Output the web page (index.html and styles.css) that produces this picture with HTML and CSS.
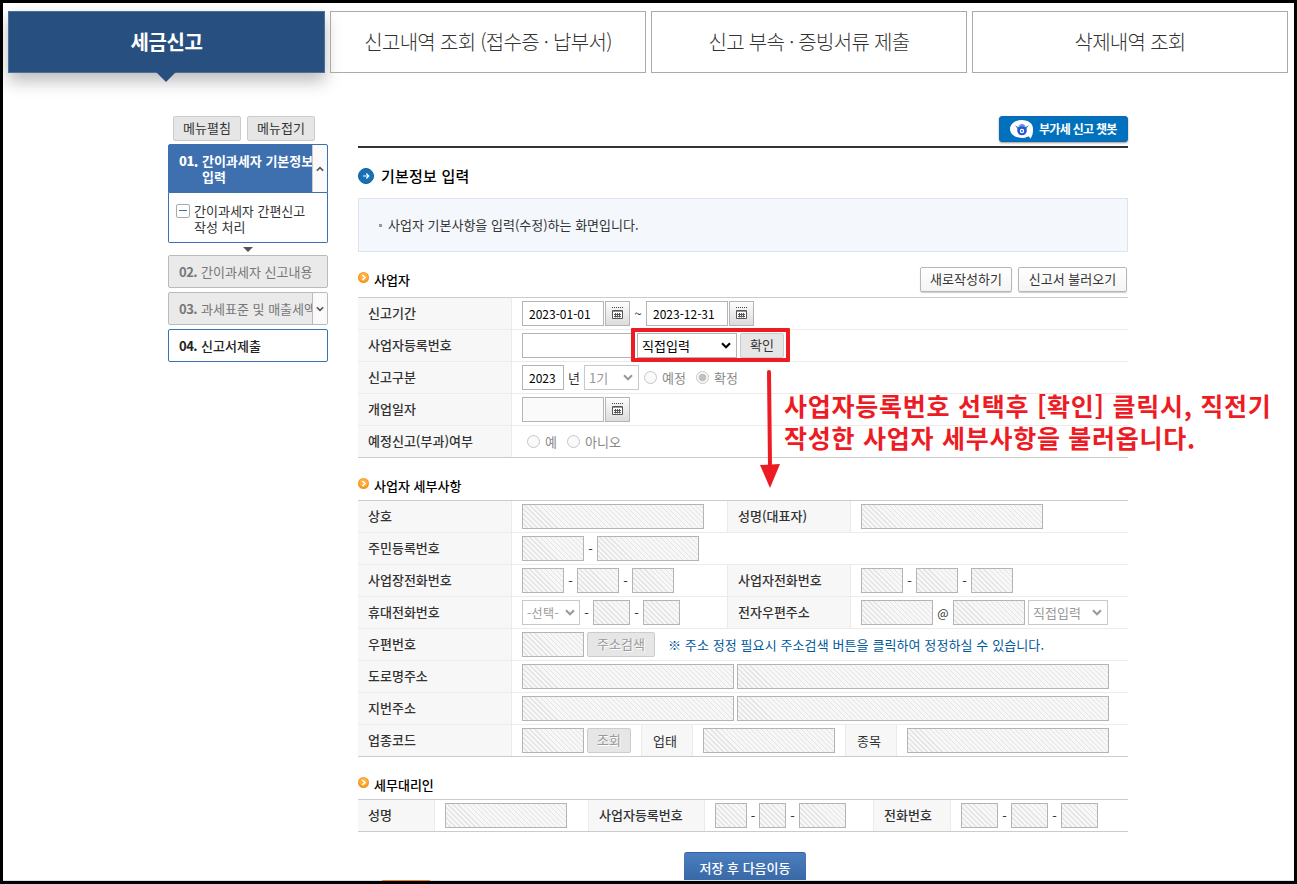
FILE: index.html
```
<!DOCTYPE html>
<html lang="ko">
<head>
  <meta charset="UTF-8" />
  <meta name="viewport" content="width=device-width, initial-scale=1.0"/>
  <title>세금신고</title>
  <link rel="stylesheet" href="styles.css">
</head>
<body>
  <svg class="defs" width="0" height="0">
    <symbol id="cal" viewBox="0 0 11 12">
      <path d="M0 .5H11" stroke="#444" stroke-dasharray="1 1" fill="none"/>
      <path d="M.5 3.500H10.500V11.500H.5Z" stroke="#555" fill="#fff"/>
      <path d="M1 4.500H10" stroke="#999" fill="none"/>
      <path d="M2 7.500H9M2 9.500H9M3.500 6V10.500M5.500 6V10.500M7.500 6V10.500" stroke="#555" fill="none"/>
    </symbol>
    <symbol id="chev" viewBox="0 0 10 7">
      <path d="M1 1.300L5 5.200L9 1.300" stroke="currentColor" stroke-width="2.100" fill="none"/>
    </symbol>
    <symbol id="bullet" viewBox="0 0 11 11">
      <circle cx="5.500" cy="5.500" r="5.500" fill="#f7941d"/>
      <circle cx="5.500" cy="4.800" r="4.300" fill="#fdb040"/>
      <path d="M4.300 3L7 5.500L4.300 8" stroke="#fff" stroke-width="1.600" fill="none"/>
    </symbol>
  </svg>

  <nav class="tabs">
    <a class="tab active">세금신고</a>
    <a class="tab">신고내역 조회 (접수증 · 납부서)</a>
    <a class="tab">신고 부속 · 증빙서류 제출</a>
    <a class="tab">삭제내역 조회</a>
  </nav>

  <div class="wrap">
    <aside class="side">
      <div class="side-btns">
        <button class="btn gray">메뉴펼침</button>
        <button class="btn gray">메뉴접기</button>
      </div>
      <div class="step on">
        <div class="step-title"><b>01.</b><span>간이과세자 기본정보<br>입력</span></div>
        <div class="toggle"><svg class="flip" width="8" height="6"><use href="#chev"/></svg></div>
      </div>
      <div class="step-sub">
        <i class="minus"></i>
        <span>간이과세자 간편신고<br>작성 처리</span>
      </div>
      <div class="down"></div>
      <div class="step"><div class="step-title"><b>02.</b><span>간이과세자 신고내용</span></div></div>
      <div class="step">
        <div class="step-title"><b>03.</b><span>과세표준 및 매출세액</span></div>
        <div class="toggle"><svg width="8" height="6"><use href="#chev"/></svg></div>
      </div>
      <div class="step last"><div class="step-title"><b>04.</b><span>신고서제출</span></div></div>
    </aside>

    <main class="main">
      <div class="top-line">
        <button class="chatbot">
          <svg width="26" height="21" viewBox="0 0 26 21">
            <path d="M13 1C19 1 24 4.500 24 9.500C24 13 24 17 21 20C21 18 20 17.500 19 17.500C17 18.500 15 19 13 19C6 19 1 15 1 10S6 1 13 1Z" fill="#fff"/>
            <path d="M6 6L10 9V12Z" fill="#277a78"/><path d="M20 6L15 9V13Z" fill="#2f9b72"/>
            <circle cx="13" cy="11.500" r="4.800" fill="#2857d6"/>
            <path d="M9 7.500Q13 2 17 7.500Z" fill="#6d8df0"/>
            <circle cx="13" cy="12" r="2.200" fill="#fff"/><circle cx="13" cy="12" r="1" fill="#2857d6"/>
          </svg>
          <span>부가세 신고 챗봇</span>
        </button>
      </div>
      <h1>
        <svg width="16" height="16" viewBox="0 0 16 16">
          <circle cx="8" cy="8" r="7.500" fill="#1672b5" stroke="#0f5f9c"/>
          <path d="M5 8H10.500M8.300 5.500L10.800 8L8.300 10.500" stroke="#fff" stroke-width="1.200" fill="none"/>
        </svg>
        <span>기본정보 입력</span>
      </h1>
      <div class="info"><i></i><span>사업자 기본사항을 입력(수정)하는 화면입니다.</span></div>

      <div class="head">
        <h2><svg width="11" height="11"><use href="#bullet"/></svg><span>사업자</span></h2>
        <div class="head-btns">
          <button class="btn white w92">새로작성하기</button>
          <button class="btn white w109">신고서 불러오기</button>
        </div>
      </div>
      <div class="table">
        <div class="row">
          <div class="th">신고기간</div>
          <div class="td">
            <span class="inp w82">2023-01-01</span><span class="cal"><svg width="11" height="12"><use href="#cal"/></svg></span>
            <span class="sep w16">~</span>
            <span class="inp w82">2023-12-31</span><span class="cal"><svg width="11" height="12"><use href="#cal"/></svg></span>
          </div>
        </div>
        <div class="row">
          <div class="th">사업자등록번호</div>
          <div class="td">
            <span class="inp w112"></span>
            <div class="pick">
              <span class="sel w100 dark">직접입력<svg width="10" height="7"><use href="#chev"/></svg></span>
              <button class="btn gray w44">확인</button>
            </div>
          </div>
        </div>
        <div class="row">
          <div class="th">신고구분</div>
          <div class="td">
            <span class="inp w42">2023</span>
            <span class="sep w20">년</span>
            <span class="sel w55 dim">1기<svg width="10" height="7"><use href="#chev"/></svg></span>
            <label class="radio ml5"><i></i>예정</label>
            <label class="radio checked ml10"><i></i>확정</label>
          </div>
        </div>
        <div class="row">
          <div class="th">개업일자</div>
          <div class="td"><span class="inp w82 pale"></span><span class="cal"><svg width="11" height="12"><use href="#cal"/></svg></span></div>
        </div>
        <div class="row end">
          <div class="th">예정신고(부과)여부</div>
          <div class="td">
            <label class="radio ml5"><i></i>예</label>
            <label class="radio ml10"><i></i>아니오</label>
          </div>
        </div>
        <div class="mark"></div>
        <svg class="arrow" width="20" height="120" viewBox="0 0 20 120">
          <path d="M9 3L10 97" stroke="#ed1c24" stroke-width="4" stroke-linecap="round"/>
          <path d="M0 96L20 95L10 119Z" fill="#ed1c24"/>
        </svg>
        <p class="memo">사업자등록번호 선택후 [확인] 클릭시, 직전기<br>작성한 사업자 세부사항을 불러옵니다.</p>
      </div>

      <div class="head second">
        <h2><svg width="11" height="11"><use href="#bullet"/></svg><span>사업자 세부사항</span></h2>
      </div>
      <div class="table">
        <div class="row">
          <div class="th">상호</div>
          <div class="td c1"><span class="inp off w182"></span></div>
          <div class="th th2">성명(대표자)</div>
          <div class="td"><span class="inp off w182"></span></div>
        </div>
        <div class="row">
          <div class="th">주민등록번호</div>
          <div class="td"><span class="inp off w62"></span><span class="sep">-</span><span class="inp off w102"></span></div>
        </div>
        <div class="row">
          <div class="th">사업장전화번호</div>
          <div class="td c1"><span class="inp off w42"></span><span class="sep">-</span><span class="inp off w42"></span><span class="sep">-</span><span class="inp off w42"></span></div>
          <div class="th th2">사업자전화번호</div>
          <div class="td"><span class="inp off w42"></span><span class="sep">-</span><span class="inp off w42"></span><span class="sep">-</span><span class="inp off w42"></span></div>
        </div>
        <div class="row">
          <div class="th">휴대전화번호</div>
          <div class="td c1"><span class="sel w58 dim tight">-선택-<svg width="10" height="7"><use href="#chev"/></svg></span><span class="sep">-</span><span class="inp off w37"></span><span class="sep">-</span><span class="inp off w37"></span></div>
          <div class="th th2">전자우편주소</div>
          <div class="td"><span class="inp off w72"></span><span class="sep at">@</span><span class="inp off w72"></span><span class="sel w80 dim ml3">직접입력<svg width="10" height="7"><use href="#chev"/></svg></span></div>
        </div>
        <div class="row">
          <div class="th">우편번호</div>
          <div class="td"><span class="inp off w62"></span><button class="btn gray disabled w68 ml3">주소검색</button><span class="note">※ 주소 정정 필요시 주소검색 버튼을 클릭하여 정정하실 수 있습니다.</span></div>
        </div>
        <div class="row">
          <div class="th">도로명주소</div>
          <div class="td"><span class="inp off w212"></span><span class="inp off w372 ml3"></span></div>
        </div>
        <div class="row">
          <div class="th">지번주소</div>
          <div class="td"><span class="inp off w212"></span><span class="inp off w372 ml3"></span></div>
        </div>
        <div class="row end">
          <div class="th">업종코드</div>
          <div class="td c129"><span class="inp off w62"></span><button class="btn gray disabled w44 ml3">조회</button></div>
          <div class="th sm">업태</div>
          <div class="td c152"><span class="inp off w132"></span></div>
          <div class="th sm">종목</div>
          <div class="td"><span class="inp off w202"></span></div>
        </div>
      </div>

      <div class="head third">
        <h2><svg width="11" height="11"><use href="#bullet"/></svg><span>세무대리인</span></h2>
      </div>
      <div class="table">
        <div class="row end">
          <div class="th a1">성명</div>
          <div class="td c153"><span class="inp off w122"></span></div>
          <div class="th a2">사업자등록번호</div>
          <div class="td c168"><span class="inp off w32"></span><span class="sep w12">-</span><span class="inp off w27"></span><span class="sep">-</span><span class="inp off w47"></span></div>
          <div class="th a3">전화번호</div>
          <div class="td"><span class="inp off w37"></span><span class="sep">-</span><span class="inp off w37"></span><span class="sep">-</span><span class="inp off w37"></span></div>
        </div>
      </div>

      <div class="actions"><button class="save">저장 후 다음이동</button></div>
    </main>
  </div>
  <div class="foot"><i></i></div>
</body>
</html>
```
FILE: styles.css
```
:root {
  --text: #333;
  --blue: #3e70af;
  --line: #ebebeb;
  --line-dark: #ccc;
  --red: #ed1c24;
}

* {
  margin: 0;
  padding: 0;
  box-sizing: border-box;
}

body {
  position: relative;
  height: 884px;
  border: 3px solid #000;
  background: #fff;
  color: var(--text);
  font-family: "Noto Sans CJK KR", sans-serif;
  font-size: 13px;
  line-height: 16px;
  overflow: hidden;
}

button {
  font: inherit;
  color: inherit;
}

.defs {
  position: absolute;
}

.tabs {
  display: flex;
  gap: 5px;
  padding: 8px 0 0 5px;
}

.tab {
  position: relative;
  width: 316px;
  height: 62px;
  border: 1px solid #aaa;
  display: flex;
  align-items: center;
  justify-content: center;
  font-size: 20px;
  font-weight: 300;
  letter-spacing: -0.7px;
  white-space: nowrap;
}

.tab.active {
  width: 317px;
  background: #275081;
  border-color: #4d6f98;
  color: #fff;
  font-weight: bold;
  letter-spacing: -0.4px;
  box-shadow: 0 8px 16px rgba(0, 0, 0, 0.27);
}

.tab.active::after {
  content: "";
  position: absolute;
  left: 147px;
  top: 60px;
  border: 10px solid transparent;
  border-top-color: #275081;
  border-bottom: 0;
}

.wrap {
  display: flex;
  padding-left: 165px;
}

/* left menu */
.side {
  width: 160px;
  margin-right: 30px;
  padding-top: 43px;
}

.side-btns {
  display: flex;
  gap: 6px;
  padding: 0 5px;
  margin-bottom: 3px;
}

.side-btns .btn {
  width: 68px;
}

.btn {
  height: 25px;
  padding-bottom: 2px;
  border: 1px solid #ccc;
  border-radius: 2px;
  line-height: 20px;
  white-space: nowrap;
  text-align: center;
}

.btn.gray {
  background: #e6e6e6;
}

.btn.white {
  background: linear-gradient(#fff, #f4f4f4);
  border-color: #b7b7b7;
  box-shadow: 0 1px 1px rgba(0, 0, 0, 0.2);
}

.btn.disabled {
  color: #999;
  text-shadow: 1px 1px 0 #fff;
}

.step {
  display: flex;
  height: 33px;
  margin-bottom: 4px;
  border: 1px solid #bbb;
  border-radius: 2px;
  background: #eaeaea;
  color: #777;
  overflow: hidden;
}

.step-title {
  flex: 1;
  display: flex;
  gap: 4px;
  padding: 8px 0 0 10px;
  white-space: nowrap;
  overflow: hidden;
}

.step-title b {
  letter-spacing: -0.5px;
}

.toggle {
  width: 15px;
  border-left: 1px solid #bbb;
  background: #fafafa;
  color: #555;
  display: flex;
  align-items: center;
  justify-content: center;
}

.flip {
  transform: rotate(180deg);
}

.step.on {
  height: 49px;
  margin: 0;
  background: var(--blue);
  border-color: var(--blue);
  border-radius: 2px 2px 0 0;
  color: #fff;
  font-weight: bold;
}

.step.on .toggle {
  width: 16px;
  margin: -1px;
  border: 1px solid #ccc;
}

.step.last {
  background: #fff;
  border-color: var(--blue);
  color: #222;
  font-weight: 500;
}

.step-sub {
  display: flex;
  gap: 4px;
  height: 50px;
  padding: 10px 0 0 7px;
  border: 1px solid var(--blue);
  border-top: 0;
  border-radius: 0 0 2px 2px;
}

.minus {
  width: 14px;
  height: 14px;
  margin-top: 1px;
  border: 1px solid #aaa;
  border-radius: 2px;
  background: linear-gradient(var(--blue), var(--blue)) 2px 5px / 8px 1px no-repeat;
}

.down {
  width: 9px;
  margin: 4px auto 3px;
  border: 5px solid transparent;
  border-top-color: #555;
  border-bottom: 0;
}

/* content */
.main {
  width: 770px;
}

.top-line {
  height: 75px;
  padding-top: 43px;
  border-bottom: 2px solid #333;
  display: flex;
  justify-content: flex-end;
}

.chatbot {
  display: flex;
  align-items: center;
  gap: 4px;
  width: 129px;
  height: 26px;
  padding-left: 9px;
  border: 1px solid #1565b5;
  border-radius: 3px;
  background: #0071bc;
  box-shadow: 0 1px 2px rgba(0, 0, 0, 0.4);
  color: #fff;
  font-size: 12px;
  font-weight: bold;
  letter-spacing: -0.7px;
  white-space: nowrap;
}

h1 {
  display: flex;
  align-items: center;
  gap: 7px;
  height: 50px;
  padding-top: 5px;
  font-size: 15px;
  font-weight: 500;
  color: #000;
  letter-spacing: 0.2px;
}

.info {
  display: flex;
  align-items: center;
  gap: 6px;
  height: 54px;
  padding-left: 20px;
  border: 1px solid #dde4f0;
  background: #f4f7fc;
}

.info i {
  width: 3px;
  height: 3px;
  background: #999;
}

.head {
  display: flex;
  justify-content: space-between;
  height: 45px;
  padding-top: 15px;
}

.head.second,
.head.third {
  height: 42px;
}

h2 {
  display: flex;
  gap: 5px;
  padding-top: 5px;
  font-size: 13px;
  font-weight: 500;
  color: #000;
}

.head-btns {
  display: flex;
  gap: 6px;
  padding-right: 1px;
}

.table {
  position: relative;
  border-top: 1px solid var(--line-dark);
}

.row {
  display: flex;
  height: 32px;
  border-bottom: 1px solid var(--line);
}

.row.end {
  border-bottom-color: var(--line-dark);
}

.th {
  width: 154px;
  padding: 7px 0 0 10px;
  border-right: 1px solid var(--line);
  background: #f7f7f7;
  font-weight: 500;
  white-space: nowrap;
}

.th2 {
  width: 124px;
  border-left: 1px solid var(--line);
}

.th.sm {
  width: 52px;
  padding: 8px 0 0 11px;
  border-left: 1px solid var(--line);
  font-weight: 400;
}

.th.a1 { width: 77px; }
.th.a2 { width: 117px; border-left: 1px solid var(--line); }
.th.a3 { width: 78px; border-left: 1px solid var(--line); }

.td {
  display: flex;
  align-items: center;
  padding-left: 10px;
  white-space: nowrap;
}

.td.c1 { width: 215px; }
.td.c129 { width: 129px; }
.td.c152 { width: 152px; }
.td.c153 { width: 153px; }
.td.c168 { width: 168px; }

.inp {
  height: 25px;
  padding: 4px 0 0 6px;
  border: 1px solid #b4b4b4;
  font-size: 12px;
  color: #000;
}

.inp.pale {
  background: #fafafa;
}

.inp.off {
  background: repeating-linear-gradient(45deg, #f7f7f7 0 2.8px, #e4e4e4 2.8px 3.54px);
}

.cal {
  display: flex;
  align-items: center;
  justify-content: center;
  width: 25px;
  height: 25px;
  margin-left: 1px;
  padding-bottom: 1px;
  border: 1px solid #b4b4b4;
  background: linear-gradient(#fdfdfd, #dcdcdc);
}

.sep {
  width: 13px;
  padding-top: 1px;
  text-align: center;
}

.sep.at {
  width: 20px;
  padding: 0;
  font-size: 12px;
}

.sel {
  display: flex;
  justify-content: space-between;
  align-items: center;
  height: 25px;
  padding: 0 5px 0 4px;
  border: 1px solid #b4b4b4;
  background: #fff;
}

.sel.dark { color: #000; }
.sel.dim { color: #999; border-color: #c8c8c8; }
.sel.tight { padding: 0 4px; font-size: 12px; letter-spacing: 0.4px; }

.pick {
  display: flex;
  gap: 3px;
  margin-left: 3px;
}

.radio {
  display: flex;
  align-items: center;
  gap: 5px;
  color: #888;
}

.radio i {
  width: 13px;
  height: 13px;
  border: 1px solid #c6c6c6;
  border-radius: 50%;
  background: #fafafa;
}

.radio.checked i {
  background: radial-gradient(circle, #c0c0c0 3.5px, #fafafa 4.2px);
}

.ml3 { margin-left: 3px; }
.ml5 { margin-left: 5px; }
.ml10 { margin-left: 10px; }

.w12 { width: 12px; }
.w16 { width: 16px; }
.w20 { width: 20px; }
.w27 { width: 27px; }
.w32 { width: 32px; }
.w37 { width: 37px; }
.w42 { width: 42px; }
.w44 { width: 44px; }
.w47 { width: 47px; }
.w55 { width: 55px; }
.w58 { width: 58px; }
.w62 { width: 62px; }
.w68 { width: 68px; }
.w72 { width: 72px; }
.w80 { width: 80px; }
.w82 { width: 82px; }
.w92 { width: 92px; }
.w100 { width: 100px; }
.w102 { width: 102px; }
.w109 { width: 109px; }
.w112 { width: 112px; }
.w122 { width: 122px; }
.w132 { width: 132px; }
.w182 { width: 182px; }
.w202 { width: 202px; }
.w212 { width: 212px; }
.w372 { width: 372px; }

.note {
  margin-left: 13px;
  padding-top: 1px;
  color: #005a9c;
  letter-spacing: 0.1px;
}

/* red guide drawn over the form */
.mark {
  position: absolute;
  left: 273px;
  top: 30px;
  width: 159px;
  height: 34px;
  border: 4px solid var(--red);
  border-radius: 1px;
}

.arrow {
  position: absolute;
  left: 402px;
  top: 71px;
}

.memo {
  position: absolute;
  left: 426px;
  top: 91px;
  color: var(--red);
  font-size: 25px;
  font-weight: bold;
  letter-spacing: 0.74px;
  line-height: 32px;
  white-space: nowrap;
}

.actions {
  padding: 20px 0 0 326px;
}

.save {
  width: 122px;
  height: 34px;
  padding-bottom: 3px;
  border: 0;
  border-top: 1px solid #2f62a3;
  border-radius: 3px 3px 0 0;
  background: linear-gradient(#4a7ebf, #3564a0);
  color: #fff;
  font-weight: 500;
}

.foot {
  position: absolute;
  left: 0;
  right: 0;
  bottom: 0;
  height: 1px;
  background: #d5e3ea;
}

.foot i {
  display: block;
  width: 48px;
  height: 1px;
  margin-left: 379px;
  background: #f58220;
}
```
